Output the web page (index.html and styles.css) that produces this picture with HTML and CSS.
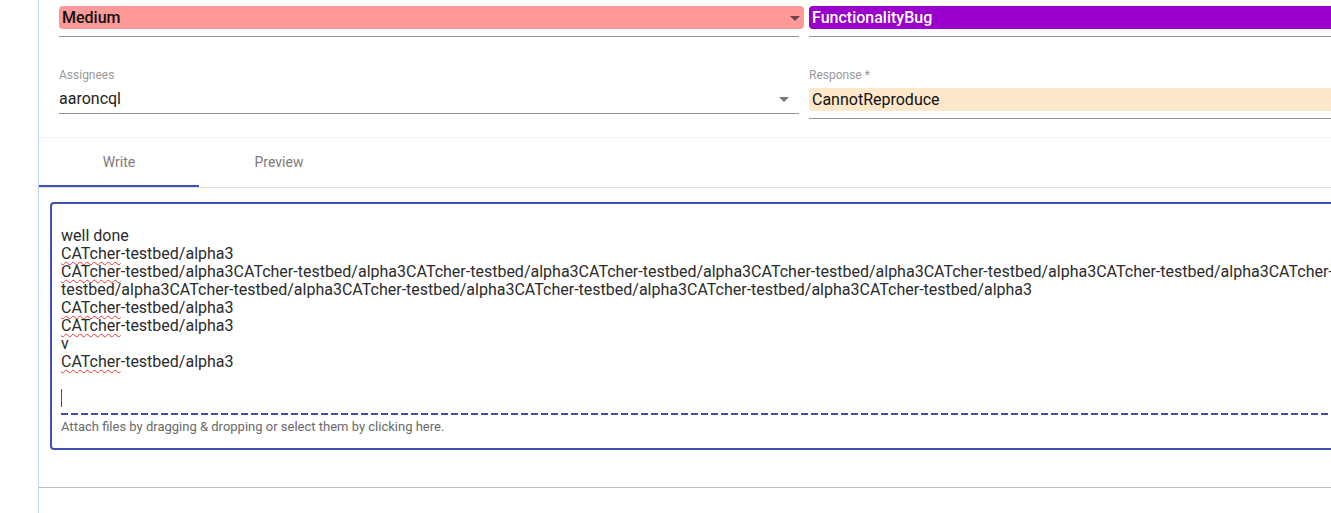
FILE: index.html
```html
<!DOCTYPE html>
<html>
<head>
<meta charset="utf-8">
<link rel="stylesheet" href="styles.css">
</head>
<body>
<div class="page">
  <div class="fields">
    <div class="field row1">
      <div class="select-box medium">
        <span class="val">Medium</span>
        <span class="arrow dark"></span>
      </div>
      <div class="underline u1"></div>
    </div>
    <div class="field row1">
      <div class="select-box bug">
        <span class="val">FunctionalityBug</span>
      </div>
      <div class="underline u1"></div>
    </div>
    <div class="field row2">
      <div class="label">Assignees</div>
      <div class="plain-value">
        <span>aaroncql</span>
        <span class="arrow"></span>
      </div>
      <div class="underline"></div>
    </div>
    <div class="field row2">
      <div class="label">Response *</div>
      <div class="response-box">CannotReproduce</div>
      <div class="underline u3"></div>
    </div>
  </div>

  <div class="tabs">
    <div class="tab active">Write</div>
    <div class="tab">Preview</div>
  </div>

  <div class="editor">
    <div class="text">
      <div class="line">&nbsp;</div>
      <div class="line">well done</div>
      <div class="line"><span class="sp">CATcher</span>-testbed/alpha3</div>
      <div class="line"><span class="sp">CATcher</span>-testbed/alpha3CATcher-testbed/alpha3CATcher-testbed/alpha3CATcher-testbed/alpha3CATcher-testbed/alpha3CATcher-testbed/alpha3CATcher-testbed/alpha3CATcher-</div>
      <div class="line">testbed/alpha3CATcher-testbed/alpha3CATcher-testbed/alpha3CATcher-testbed/alpha3CATcher-testbed/alpha3CATcher-testbed/alpha3</div>
      <div class="line"><span class="sp">CATcher</span>-testbed/alpha3</div>
      <div class="line"><span class="sp">CATcher</span>-testbed/alpha3</div>
      <div class="line">v</div>
      <div class="line"><span class="sp">CATcher</span>-testbed/alpha3</div>
      <div class="line">&nbsp;</div>
      <div class="line"><span class="caret"></span></div>
    </div>
    <div class="dashed"></div>
    <div class="attach">Attach files by dragging &amp; dropping or select them by clicking here.</div>
  </div>

  <div class="bottom-line"></div>
</div>
</body>
</html>
```

FILE: styles.css
```css
html, body {
  margin: 0;
  padding: 0;
  overflow: hidden;
  background: #fff;
  font-family: Roboto, "Liberation Sans", sans-serif;
}
.page {
  margin-left: 38px;
  border-left: 1px solid #c3d4f0;
  height: 513px;
  width: 1320px;
}
.fields {
  display: grid;
  grid-template-columns: 740px 540px;
  column-gap: 10px;
  padding-left: 20px;
}
.field { position: relative; }
.row1 { padding-top: 6px; height: 48px; }
.select-box {
  height: 23px;
  border-radius: 4px;
  display: flex;
  align-items: center;
  padding-left: 3px;
  font-size: 16px;
  font-weight: 500;
  position: relative;
}
.medium { background: #ff9999; width: 742px; color: #111; }
.bug { background: #9900cc; color: #fff; }
.arrow {
  position: absolute;
  right: 10px;
  top: 50%;
  margin-top: -2px;
  width: 0; height: 0;
  border-left: 5px solid transparent;
  border-right: 5px solid transparent;
  border-top: 5px solid #757575;
}
.arrow.dark { border-top-color: #6a4848; right: 4px; }
.underline { height: 1px; background: #949494; }
.u1 { margin-top: 7px; }
.row2 { height: 84px; }
.label {
  font-size: 12px;
  color: #9a9a9a;
  padding-top: 14px;
  height: 14px;
  line-height: 14px;
}
.plain-value {
  position: relative;
  font-size: 16px;
  color: #222;
  height: 23px;
  line-height: 23px;
  margin-top: 5px;
  margin-bottom: 3px;
}
.response-box {
  background: #ffe8c9;
  border-radius: 4px;
  height: 23px;
  line-height: 23px;
  font-size: 16px;
  color: #111;
  padding-left: 3px;
  margin-top: 6px;
}
.u3 { margin-top: 7px; }
.tabs {
  border-top: 1px solid #f3f3f3;
  border-bottom: 1px solid #e0e0e0;
  display: flex;
  height: 49px;
  margin-top: -1px;
}
.tab {
  width: 160px;
  text-align: center;
  font-size: 14px;
  color: #7c7c7c;
  line-height: 48px;
  height: 47px;
  border-bottom: 2px solid transparent;
}
.tab.active { border-bottom-color: #3f51b5; }
.editor {
  margin: 14px 0 0 11px;
  border: 2px solid #3f51b5;
  border-radius: 4px;
  height: 248px;
  width: 1320px;
  padding: 5px 0 0 9px;
  box-sizing: border-box;
}
.text {
  font-size: 16px;
  line-height: 18px;
  color: #2b2b2b;
  white-space: nowrap;
}
.line { height: 18px; }
.sp {
  text-decoration: underline wavy #e53935;
  text-decoration-thickness: 1px;
  text-underline-offset: 2px;
}
.caret {
  display: inline-block;
  width: 1px;
  height: 18px;
  background: #3f51b5;
  vertical-align: top;
}
.dashed {
  margin-top: 6px;
  height: 2px;
  background: repeating-linear-gradient(90deg, #3f51b5 0 7px, transparent 7px 10px);
}
.attach {
  font-size: 13px;
  color: #6a6a6a;
  margin-top: 4px;
  line-height: 15px;
}
.bottom-line {
  margin-top: 37px;
  height: 1px;
  background: #bdbdbd;
}
```
